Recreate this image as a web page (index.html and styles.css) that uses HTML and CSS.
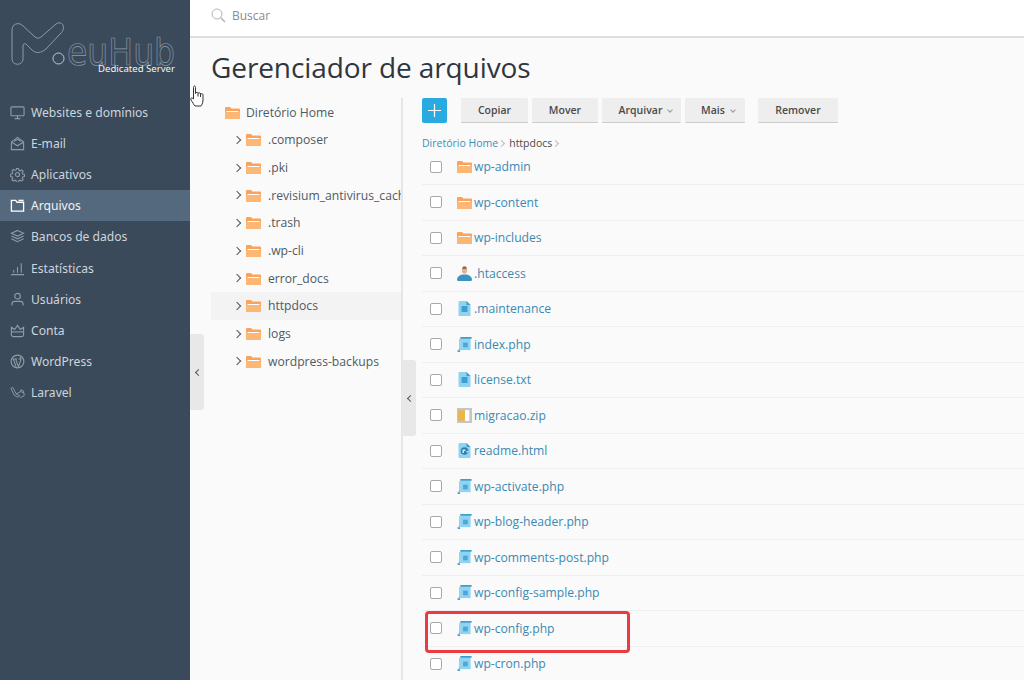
FILE: index.html
```html
<!DOCTYPE html>
<html lang="pt">
<head>
<meta charset="utf-8">
<title>Gerenciador de arquivos</title>
<link rel="stylesheet" href="styles.css">
</head>
<body>
<svg class="defs" width="0" height="0">
  <defs>
    <symbol id="folder" viewBox="0 0 15 13">
      <path d="M0 2a1 1 0 0 1 1-1h4l1.500 1.500H14a1 1 0 0 1 1 1V12a1 1 0 0 1-1 1H1a1 1 0 0 1-1-1z" fill="#f9a35c"/>
      <path d="M1.500 5h12v1.200h-12z" fill="#fff"/>
      <path d="M0 6.200h15V12a1 1 0 0 1-1 1H1a1 1 0 0 1-1-1z" fill="#fdb774"/>
    </symbol>
    <symbol id="script" viewBox="0 0 15 16">
      <path d="M3 0h12v2H3z" fill="#3d9ecb"/>
      <path d="M3 2h11v12H3z" fill="#8ed3f2"/>
      <path d="M6 6h5v5H6z" fill="#4ba9d8"/>
      <path d="M0 14h2.500c0 1 .5 2 .5 2H1c-.7 0-1-1-1-2z" fill="#3d9ecb"/>
      <path d="M3 2v12H0c1.500 0 2-1 2-3V2z" fill="#6dbde3"/>
    </symbol>
    <symbol id="doc" viewBox="0 0 12 15">
      <path d="M0 1a1 1 0 0 1 1-1h7l4 4v10a1 1 0 0 1-1 1H1a1 1 0 0 1-1-1z" fill="#8ed3f2"/>
      <path d="M8 0l4 4H8z" fill="#3d9ecb"/>
      <path d="M3 5h6v6H3z" fill="#3f9fd0"/>
    </symbol>
    <symbol id="user" viewBox="0 0 15 15">
      <ellipse cx="7.500" cy="4" rx="2.600" ry="3.800" fill="#e8b08f"/>
      <path d="M5.500 1.500C6 0 9 0 9.500 1.500V3h-4z" fill="#8d6b52"/>
      <path d="M0 14c0-3.500 3-5 5.500-5.500h4C12 9 15 10.500 15 14c0 .6-1 1-2 1H2c-1 0-2-.4-2-1z" fill="#3d94c4"/>
    </symbol>
    <symbol id="zip" viewBox="0 0 14 14">
      <path d="M0 0h14v14H0z" fill="#c5c5c5"/>
      <path d="M1 2h6.500v10H1z" fill="#e9b54f"/>
      <path d="M7.500 2h4v10h-4z" fill="#fff"/>
    </symbol>
    <symbol id="html" viewBox="0 0 12 15">
      <path d="M0 1a1 1 0 0 1 1-1h7l4 4v10a1 1 0 0 1-1 1H1a1 1 0 0 1-1-1z" fill="#8ed3f2"/>
      <path d="M8 0l4 4H8z" fill="#3d9ecb"/>
      <circle cx="6" cy="8" r="3.800" fill="#2f7fb0"/>
      <path d="M4 6.500h3v1.500H5.500v2H4zM8 8h1.500v1.500H8z" fill="#cfeaf8"/>
    </symbol>
  </defs>
</svg>

<div class="app">
  <aside class="sidebar">
    <div class="logo">
      <svg class="logo-mark" width="56" height="46" viewBox="0 0 56 46" fill="none">
        <path d="M2 8c0-6 6-8 10-5L25 15c2 1.500 4 1.500 6 0L46 2c4-3 9 0 7 6-.5 1.500-1 2-2 3L36 27c-5 4-10 5-14 1l-6-6c-2-1-3 0-3 2v13c0 7-11 7-11 0z" stroke="#8e9aa6" stroke-width="1"/>
      </svg>
      <svg class="logo-dot" width="13" height="13" viewBox="0 0 13 13" fill="none"><circle cx="6.500" cy="6.500" r="5.500" stroke="#c3cad1" stroke-width="1"/></svg>
      <span class="logo-word">euHub</span>
      <span class="logo-sub">Dedicated Server</span>
    </div>
    <nav class="nav">
      <a class="nav-item">
        <svg class="nav-icon" viewBox="0 0 16 16" fill="none" stroke="#8f9ba6" stroke-width="1.200"><rect x="1" y="2" width="14" height="9.500" rx="1"/><path d="M5 14.500h6M8 11.500v3"/></svg>
        <span>Websites e domínios</span>
      </a>
      <a class="nav-item">
        <svg class="nav-icon" viewBox="0 0 16 16" fill="none" stroke="#8f9ba6" stroke-width="1.200"><path d="M1.500 6.500 8 1.500l6.500 5v8h-13z"/><path d="M1.500 6.500 8 10.500l6.500-4M4.500 5.500l3.500-2 3.500 2"/></svg>
        <span>E-mail</span>
      </a>
      <a class="nav-item">
        <svg class="nav-icon" viewBox="0 0 16 16" fill="none" stroke="#8f9ba6" stroke-width="1.200"><circle cx="8" cy="8" r="2.200"/><path d="M6.800 1.200h2.400l.4 2 1.400.6 1.700-1.100 1.700 1.700-1.100 1.700.6 1.400 2 .4v2.400l-2 .4-.6 1.400 1.100 1.700-1.700 1.700-1.700-1.100-1.400.6-.4 1.900H6.800l-.4-1.900-1.400-.6-1.700 1.100-1.700-1.700 1.100-1.700-.6-1.400-1.900-.4V7.500l1.900-.4.600-1.400-1.100-1.700 1.700-1.700 1.700 1.100 1.400-.6z" transform="translate(.5 .5) scale(.94)"/></svg>
        <span>Aplicativos</span>
      </a>
      <a class="nav-item nav-active">
        <svg class="nav-icon" viewBox="0 0 16 16" fill="none" stroke="#fff" stroke-width="1.400"><path d="M1.500 2.500h4.500l1.500 2h7v9.500h-13z"/><path d="M9 2.500h5.500"/></svg>
        <span>Arquivos</span>
      </a>
      <a class="nav-item">
        <svg class="nav-icon" viewBox="0 0 16 16" fill="none" stroke="#8f9ba6" stroke-width="1.200"><path d="M8 1.500l6.500 3L8 7.500l-6.500-3zM1.500 7.500 8 10.500l6.500-3M1.500 10.500 8 13.500l6.500-3"/></svg>
        <span>Bancos de dados</span>
      </a>
      <a class="nav-item">
        <svg class="nav-icon" viewBox="0 0 16 16" fill="none" stroke="#8f9ba6" stroke-width="1.200"><path d="M1 14.500h14M4 12.500v-3M8 12.500V6.500M12 12.500V2.500"/></svg>
        <span>Estatísticas</span>
      </a>
      <a class="nav-item">
        <svg class="nav-icon" viewBox="0 0 16 16" fill="none" stroke="#8f9ba6" stroke-width="1.200"><circle cx="8" cy="4.500" r="3"/><path d="M2 14.500v-1.500c0-2 1.500-3 3-3h6c1.500 0 3 1 3 3v1.500"/></svg>
        <span>Usuários</span>
      </a>
      <a class="nav-item">
        <svg class="nav-icon" viewBox="0 0 16 16" fill="none" stroke="#8f9ba6" stroke-width="1.200"><path d="M1.500 4.500 5 7l3-4.500L11 7l3.500-2.500v8c0 1-1 2-2 2h-9c-1 0-2-1-2-2z"/><path d="M1.500 9.500h13"/></svg>
        <span>Conta</span>
      </a>
      <a class="nav-item">
        <svg class="nav-icon" viewBox="0 0 16 16" fill="none" stroke="#8f9ba6" stroke-width="1.200"><circle cx="8" cy="8" r="6.800"/><path d="M3.500 5.500l3 8M6 5.500l3 8 2.500-7c.5-1.500 0-2.500-1-3M3 5.300h4.500M9 5.300h2"/></svg>
        <span>WordPress</span>
      </a>
      <a class="nav-item">
        <svg class="nav-icon" viewBox="0 0 16 16" fill="none" stroke="#8f9ba6" stroke-width="1"><path d="M1 3.500l2-1 3.500 7 4 2-2 1.500-4-2zM6.500 9.500l5-2.500 3.500 1.500v3l-4 2M11.500 7v-2l3 1.500v2"/></svg>
        <span>Laravel</span>
      </a>
    </nav>
  </aside>

  <main class="main">
    <header class="topbar">
      <svg class="search-icon" width="15" height="15" viewBox="0 0 15 15" fill="none" stroke="#b5b5b5" stroke-width="1"><circle cx="6" cy="6" r="5"/><path d="M9.800 9.800 14 14" stroke-width="1.600"/></svg>
      <span class="search-text">Buscar</span>
    </header>

    <h1 class="title">Gerenciador de arquivos</h1>

    <div class="columns">
      <section class="tree">
        <div class="tree-row tree-root">
          <svg class="folder-icon"><use href="#folder"/></svg>
          <span>Diretório Home</span>
        </div>
        <div class="tree-row"><i class="chev"></i><svg class="folder-icon"><use href="#folder"/></svg><span>.composer</span></div>
        <div class="tree-row"><i class="chev"></i><svg class="folder-icon"><use href="#folder"/></svg><span>.pki</span></div>
        <div class="tree-row"><i class="chev"></i><svg class="folder-icon"><use href="#folder"/></svg><span>.revisium_antivirus_cache</span></div>
        <div class="tree-row"><i class="chev"></i><svg class="folder-icon"><use href="#folder"/></svg><span>.trash</span></div>
        <div class="tree-row"><i class="chev"></i><svg class="folder-icon"><use href="#folder"/></svg><span>.wp-cli</span></div>
        <div class="tree-row"><i class="chev"></i><svg class="folder-icon"><use href="#folder"/></svg><span>error_docs</span></div>
        <div class="tree-row tree-selected"><i class="chev"></i><svg class="folder-icon"><use href="#folder"/></svg><span>httpdocs</span></div>
        <div class="tree-row"><i class="chev"></i><svg class="folder-icon"><use href="#folder"/></svg><span>logs</span></div>
        <div class="tree-row"><i class="chev"></i><svg class="folder-icon"><use href="#folder"/></svg><span>wordpress-backups</span></div>
      </section>

      <section class="files">
        <div class="toolbar">
          <button class="btn-add"><svg width="13" height="13" viewBox="0 0 13 13" stroke="#fff" stroke-width="1.200"><path d="M6.500 0v13M0 6.500h13"/></svg></button>
          <button class="btn btn-copy">Copiar</button>
          <button class="btn btn-move">Mover</button>
          <button class="btn btn-arch">Arquivar<i class="caret"></i></button>
          <button class="btn btn-more">Mais<i class="caret"></i></button>
          <button class="btn btn-del">Remover</button>
        </div>
        <div class="crumbs"><a>Diretório Home</a><i class="sep"></i><span>httpdocs</span><i class="sep"></i></div>
        <ul class="list">
          <li class="row"><i class="check"></i><svg class="ficon"><use href="#folder"/></svg><a>wp-admin</a></li>
          <li class="row"><i class="check"></i><svg class="ficon"><use href="#folder"/></svg><a>wp-content</a></li>
          <li class="row"><i class="check"></i><svg class="ficon"><use href="#folder"/></svg><a>wp-includes</a></li>
          <li class="row"><i class="check"></i><svg class="ficon"><use href="#user"/></svg><a>.htaccess</a></li>
          <li class="row"><i class="check"></i><svg class="ficon"><use href="#doc"/></svg><a>.maintenance</a></li>
          <li class="row"><i class="check"></i><svg class="ficon"><use href="#script"/></svg><a>index.php</a></li>
          <li class="row"><i class="check"></i><svg class="ficon"><use href="#doc"/></svg><a>license.txt</a></li>
          <li class="row"><i class="check"></i><svg class="ficon"><use href="#zip"/></svg><a>migracao.zip</a></li>
          <li class="row"><i class="check"></i><svg class="ficon"><use href="#html"/></svg><a>readme.html</a></li>
          <li class="row"><i class="check"></i><svg class="ficon"><use href="#script"/></svg><a>wp-activate.php</a></li>
          <li class="row"><i class="check"></i><svg class="ficon"><use href="#script"/></svg><a>wp-blog-header.php</a></li>
          <li class="row"><i class="check"></i><svg class="ficon"><use href="#script"/></svg><a>wp-comments-post.php</a></li>
          <li class="row"><i class="check"></i><svg class="ficon"><use href="#script"/></svg><a>wp-config-sample.php</a></li>
          <li class="row"><i class="check"></i><svg class="ficon"><use href="#script"/></svg><a>wp-config.php</a></li>
          <li class="row"><i class="check"></i><svg class="ficon"><use href="#script"/></svg><a>wp-cron.php</a></li>
        </ul>
      </section>
    </div>
  </main>
</div>

<div class="handle handle-side"><i class="handle-chev"></i></div>
<div class="handle handle-tree"><i class="handle-chev"></i></div>
<div class="highlight"></div>
<svg class="cursor" width="15" height="22" viewBox="0 0 15 22" fill="#fff" stroke="#333" stroke-width="1" stroke-linejoin="round">
  <path d="M3.500 2.500c0-2 2-2 2 0v6c.5-1.500 2.500-1.500 2.500 0 .5-1 2.500-1 2.500.5.5-.5 2.500-.5 2.500 1v5c0 3-1.500 5.500-2 6H5c-1-1-2.500-4-4-6-1-1.500.5-3 2.500-1z"/>
  <path d="M8 8.500v3M10.500 9v3" fill="none"/>
</svg>
</body>
</html>
```
FILE: styles.css
```css
* { box-sizing: border-box; }
html, body { margin: 0; padding: 0; height: 100%; overflow: hidden; }
body { font-family: "Open Sans", "Noto Sans", sans-serif; font-size: 13px; color: #444; background: #fafafa; position: relative; }
.defs { position: absolute; }

.app { display: flex; height: 680px; }

/* sidebar */
.sidebar { width: 190px; flex: none; background: #3a4a5a; display: flex; flex-direction: column; }
.logo { height: 97px; position: relative; }
.logo-mark { position: absolute; left: 10px; top: 22px; }
.logo-dot { position: absolute; left: 52px; top: 52px; }
.logo-word { position: absolute; left: 67px; top: 32px; font-family: "DejaVu Sans", sans-serif; font-size: 38px; line-height: 40px; color: transparent; -webkit-text-stroke: .7px #8e9aa6; transform: scaleX(.87); transform-origin: left; }
.logo-sub { position: absolute; left: 98px; top: 62px; font-family: "Noto Sans", sans-serif; font-size: 9.600px; line-height: 14px; color: #f2f4f6; white-space: nowrap; }
.nav { display: flex; flex-direction: column; }
.nav-item { height: 31.100px; display: flex; align-items: center; gap: 6px; padding-left: 10px; color: #cfd5da; font-family: "Noto Sans", sans-serif; font-size: 12.100px; }
.nav-active { background: #54697d; color: #f1f3f5; }
.nav-icon { width: 15px; height: 15px; flex: none; }

/* main */
.main { flex: 1; min-width: 0; display: flex; flex-direction: column; overflow: hidden; }
.topbar { height: 38px; flex: none; background: #fff; border-bottom: 2px solid #dedede; display: flex; align-items: center; gap: 6px; padding: 0 0 6px 21px; }
.search-text { color: #8a8a8a; font-size: 12px; }
.title { margin: 0; height: 60px; flex: none; padding: 11px 0 0 21px; font-size: 28px; line-height: 36px; font-weight: 400; color: #2f3640; letter-spacing: -.1px; }
.columns { flex: 1; display: flex; min-height: 0; padding-left: 21px; }

/* tree */
.tree { width: 192px; flex: none; border-right: 2px solid #e6e6e6; overflow: hidden; }
.tree-row { height: 27.700px; display: flex; align-items: center; white-space: nowrap; padding-left: 24px; font-size: 12.170px; color: #505a64; }
.tree-root { padding-left: 14px; height: 28px; }
.tree-root .folder-icon { margin-right: 6px; }
.tree-selected { background: #f3f3f3; }
.folder-icon { width: 15px; height: 13px; flex: none; margin-right: 7px; }
.chev { width: 6px; height: 6px; flex: none; margin-right: 6px; margin-left: -1px; border-top: 1.500px solid #555; border-right: 1.500px solid #555; transform: rotate(45deg); }

/* files */
.files { flex: 1; min-width: 0; padding-left: 19px; }
.toolbar { display: flex; align-items: flex-start; height: 25px; }
.btn-add { width: 25px; height: 25px; padding: 0; border: 0; border-radius: 2px; background: #29abe2; display: flex; align-items: center; justify-content: center; margin-right: 14px; }
.btn { height: 25px; padding: 0; border: 0; border-bottom: 1px solid #cbcbcb; border-radius: 1px; background: #eeeeee; color: #4a4a4a; font-family: "Open Sans", sans-serif; font-size: 10.500px; font-weight: 600; margin-right: 4px; }
.btn-copy { width: 67px; }
.btn-move { width: 66px; }
.btn-arch { width: 79px; padding-left: 8px; }
.btn-more { width: 60px; margin-right: 13px; padding-left: 6px; }
.btn-del { width: 80px; margin-right: 0; }
.caret { display: inline-block; width: 4px; height: 4px; margin: 0 0 2px 6px; border-right: 1px solid #999; border-bottom: 1px solid #999; transform: rotate(45deg); }
.crumbs { height: 26.500px; display: flex; align-items: flex-end; font-size: 10.500px; line-height: 13px; color: #4a4a4a; }
.crumbs a { color: #3d8fb8; }
.sep { width: 5px; height: 5px; margin: 0 5px 4px 1px; border-top: 1px solid #bbb; border-right: 1px solid #bbb; transform: rotate(45deg); }
.list { list-style: none; margin: 0; padding: 0; }
.row { height: 35.500px; display: flex; align-items: center; border-bottom: 1px solid #efefef; padding-left: 8px; }
.row a { color: #3a8ab3; font-size: 12.150px; }
.check { width: 12px; height: 12px; flex: none; border: 1px solid #a9a9a9; border-radius: 2px; background: #fff; margin-right: 15px; }
.ficon { width: 15px; height: 15px; flex: none; margin-right: 2px; }

/* overlays */
.handle { position: absolute; width: 14px; height: 76px; background: #e8e8e8; border-radius: 0 3px 3px 0; display: flex; align-items: center; justify-content: center; }
.handle-side { left: 190px; top: 334px; }
.handle-tree { left: 402px; top: 360px; }
.handle-chev { width: 5px; height: 5px; margin-left: 2px; border-left: 1.500px solid #555; border-bottom: 1.500px solid #555; transform: rotate(45deg); }
.highlight { position: absolute; left: 425px; top: 611px; width: 205px; height: 42px; border: 3px solid #e93b40; border-radius: 4px; }
.cursor { position: absolute; left: 190px; top: 85px; }
```
